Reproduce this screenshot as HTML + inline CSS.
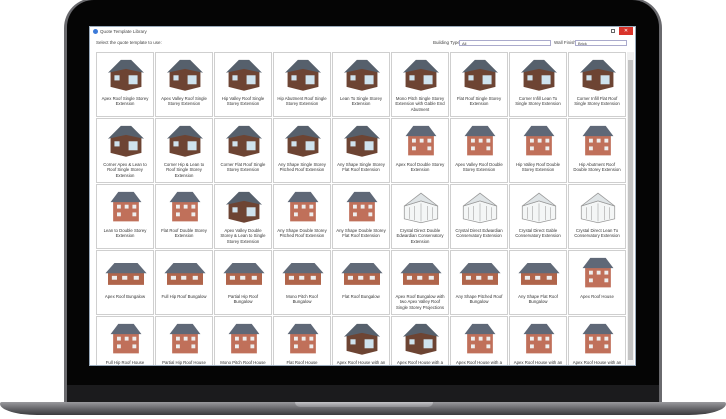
<!DOCTYPE html>
<html><head><meta charset="utf-8"><style>
*{margin:0;padding:0;box-sizing:border-box}
body{width:726px;height:419px;background:#fff;position:relative;overflow:hidden;font-family:"Liberation Sans",sans-serif}
.rim{position:absolute;left:64px;top:-2px;width:598px;height:406px;background:#6a6a6e;border-radius:30px 30px 0 0}
.lap{position:absolute;left:67px;top:0;width:592px;height:404px;background:#050505;border-radius:27px 27px 0 0}
.chin{position:absolute;left:67px;top:385px;width:592px;height:19px;background:#1b1b1d}
.base{position:absolute;left:0;top:402px;width:726px;height:13px;background:linear-gradient(#9a9a9e,#5d5d61 60%,#3a3a3c);border-radius:2px 2px 40px 40px/2px 2px 12px 12px}
.notch{position:absolute;left:295px;top:402px;width:138px;height:5px;background:linear-gradient(#c4c4c8,#8d8d91);border-radius:0 0 6px 6px}
.win{position:absolute;left:89px;top:26px;width:547px;height:340px;background:#fff;overflow:hidden;border:1px solid #9ab}
.title{height:10px;font-size:4.5px;color:#444;line-height:10px;padding-left:10px;position:relative}
.title:before{content:"";position:absolute;left:3px;top:2px;width:5px;height:5px;border-radius:50%;background:#3b7ad9}
.close{position:absolute;right:2px;top:0;width:14px;height:8px;background:#d9342b;color:#fff;font-size:5px;line-height:8px;text-align:center}
.min{position:absolute;right:20px;top:2px;width:4px;height:4px;border:1px solid #666}
.bar{position:absolute;top:13px;font-size:4.5px;color:#444}
.sel{position:absolute;top:13px;height:6px;border:1px solid #aac;background:#fff;font-size:4px;line-height:5px;padding-left:2px;color:#444}
.grid{position:absolute;left:6px;top:25px;width:530px;display:grid;grid-template-columns:repeat(9,58px);gap:1px;}
.c{height:65px;border:1px solid #cfcfcf;position:relative;background:#fff}
.c svg{position:absolute;left:8px;top:3px;width:42px;height:36px}
.c p{position:absolute;left:3px;right:3px;top:43px;font-size:4.3px;line-height:5.3px;color:#333;text-align:center}
.sb{position:absolute;right:1px;top:25px;width:7px;height:314px;background:#f0f0f0}
.sb div{position:absolute;left:1px;top:8px;width:5px;height:300px;background:#c3c3c3}
</style></head><body>
<div class="rim"></div><div class="lap"></div><div class="chin"></div>
<div class="base"></div><div class="notch"></div>
<svg width="0" height="0" style="position:absolute"><defs>
<symbol id="h" viewBox="0 0 32 28"><polygon points="4,12 16,8 28,12 28,24 16,27 4,24" fill="#6d4433"/><polygon points="2,13 12,3 20,3 30,13 16,10" fill="#56606c"/><rect x="18" y="15" width="7" height="7" fill="#cfe3ee"/><rect x="7" y="15" width="4" height="4" fill="#cfe3ee"/></symbol>
<symbol id="b" viewBox="0 0 32 28"><polygon points="2,14 30,14 30,24 2,24" fill="#b0654b"/><polygon points="0,15 7,7 25,7 32,15" fill="#616a78"/><rect x="5" y="17" width="4" height="3" fill="#eee"/><rect x="13" y="17" width="4" height="3" fill="#eee"/><rect x="22" y="17" width="4" height="3" fill="#eee"/></symbol>
<symbol id="t" viewBox="0 0 32 28"><polygon points="6,10 26,10 26,26 6,26" fill="#c0705a"/><polygon points="4,11 10,3 22,3 28,11" fill="#5f6877"/><rect x="9" y="13" width="3" height="3" fill="#eee"/><rect x="15" y="13" width="3" height="3" fill="#eee"/><rect x="21" y="13" width="3" height="3" fill="#eee"/><rect x="9" y="19" width="3" height="3" fill="#eee"/><rect x="21" y="19" width="3" height="3" fill="#eee"/></symbol>
<symbol id="k" viewBox="0 0 32 28"><polygon points="3,14 16,10 29,14 29,24 16,27 3,24" fill="#f4f6f6" stroke="#999" stroke-width=".6"/><polygon points="3,14 16,4 29,14 16,10" fill="#dfe4e6" stroke="#999" stroke-width=".6"/><path d="M7 15v9M11 14v11M16 12v14M21 14v11M25 15v9" stroke="#aaa" stroke-width=".5"/></symbol>
</defs></svg>
<div class="win">
<div class="title">Quote Template Library<div class="min"></div><div class="close">✕</div></div>
<div class="bar" style="left:6px">Select the quote template to use:</div>
<div class="bar" style="left:343px">Building Type:</div><div class="sel" style="left:369px;width:92px">All</div>
<div class="bar" style="left:464px">Wall Finish:</div><div class="sel" style="left:485px;width:52px">Brick</div>
<div class="grid">
<div class="c"><svg><use href="#h"/></svg><p>Apex Roof Single Storey Extension</p></div>
<div class="c"><svg><use href="#h"/></svg><p>Apex Valley Roof Single Storey Extension</p></div>
<div class="c"><svg><use href="#h"/></svg><p>Hip Valley Roof Single Storey Extension</p></div>
<div class="c"><svg><use href="#h"/></svg><p>Hip Abutment Roof Single Storey Extension</p></div>
<div class="c"><svg><use href="#h"/></svg><p>Lean To Single Storey Extension</p></div>
<div class="c"><svg><use href="#h"/></svg><p>Mono Pitch Single Storey Extension with Gable End Abutment</p></div>
<div class="c"><svg><use href="#h"/></svg><p>Flat Roof Single Storey Extension</p></div>
<div class="c"><svg><use href="#h"/></svg><p>Corner Infill Lean To Single Storey Extension</p></div>
<div class="c"><svg><use href="#h"/></svg><p>Corner Infill Flat Roof Single Storey Extension</p></div>
<div class="c"><svg><use href="#h"/></svg><p>Corner Apex &amp; Lean to Roof Single Storey Extension</p></div>
<div class="c"><svg><use href="#h"/></svg><p>Corner Hip &amp; Lean to Roof Single Storey Extension</p></div>
<div class="c"><svg><use href="#h"/></svg><p>Corner Flat Roof Single Storey Extension</p></div>
<div class="c"><svg><use href="#h"/></svg><p>Any Shape Single Storey Pitched Roof Extension</p></div>
<div class="c"><svg><use href="#h"/></svg><p>Any Shape Single Storey Flat Roof Extension</p></div>
<div class="c"><svg><use href="#t"/></svg><p>Apex Roof Double Storey Extension</p></div>
<div class="c"><svg><use href="#t"/></svg><p>Apex Valley Roof Double Storey Extension</p></div>
<div class="c"><svg><use href="#t"/></svg><p>Hip Valley Roof Double Storey Extension</p></div>
<div class="c"><svg><use href="#t"/></svg><p>Hip Abutment Roof Double Storey Extension</p></div>
<div class="c"><svg><use href="#t"/></svg><p>Lean to Double Storey Extension</p></div>
<div class="c"><svg><use href="#t"/></svg><p>Flat Roof Double Storey Extension</p></div>
<div class="c"><svg><use href="#h"/></svg><p>Apex Valley Double Storey &amp; Lean to Single Storey Extension</p></div>
<div class="c"><svg><use href="#t"/></svg><p>Any Shape Double Storey Pitched Roof Extension</p></div>
<div class="c"><svg><use href="#t"/></svg><p>Any Shape Double Storey Flat Roof Extension</p></div>
<div class="c"><svg><use href="#k"/></svg><p>Crystal Direct Double Edwardian Conservatory Extension</p></div>
<div class="c"><svg><use href="#k"/></svg><p>Crystal Direct Edwardian Conservatory Extension</p></div>
<div class="c"><svg><use href="#k"/></svg><p>Crystal Direct Gable Conservatory Extension</p></div>
<div class="c"><svg><use href="#k"/></svg><p>Crystal Direct Lean To Conservatory Extension</p></div>
<div class="c"><svg><use href="#b"/></svg><p>Apex Roof Bungalow</p></div>
<div class="c"><svg><use href="#b"/></svg><p>Full Hip Roof Bungalow</p></div>
<div class="c"><svg><use href="#b"/></svg><p>Partial Hip Roof Bungalow</p></div>
<div class="c"><svg><use href="#b"/></svg><p>Mono Pitch Roof Bungalow</p></div>
<div class="c"><svg><use href="#b"/></svg><p>Flat Roof Bungalow</p></div>
<div class="c"><svg><use href="#b"/></svg><p>Apex Roof Bungalow with two Apex Valley Roof Single Storey Projections</p></div>
<div class="c"><svg><use href="#b"/></svg><p>Any Shape Pitched Roof Bungalow</p></div>
<div class="c"><svg><use href="#b"/></svg><p>Any Shape Flat Roof Bungalow</p></div>
<div class="c"><svg><use href="#t"/></svg><p>Apex Roof House</p></div>
<div class="c"><svg><use href="#t"/></svg><p>Full Hip Roof House</p></div>
<div class="c"><svg><use href="#t"/></svg><p>Partial Hip Roof House</p></div>
<div class="c"><svg><use href="#t"/></svg><p>Mono Pitch Roof House</p></div>
<div class="c"><svg><use href="#t"/></svg><p>Flat Roof House</p></div>
<div class="c"><svg><use href="#h"/></svg><p>Apex Roof House with an Apex Roof Single Storey Projection</p></div>
<div class="c"><svg><use href="#h"/></svg><p>Apex Roof House with a Hip Abutment Roof Single Storey</p></div>
<div class="c"><svg><use href="#t"/></svg><p>Apex Roof House with a Lean to Single Storey Projection</p></div>
<div class="c"><svg><use href="#t"/></svg><p>Apex Roof House with an Apex Roof Double Storey Projection</p></div>
<div class="c"><svg><use href="#t"/></svg><p>Apex Roof House with an Apex Valley Roof Double Storey</p></div>
</div>
<div class="sb"><div></div></div>
</div>
</body></html>
